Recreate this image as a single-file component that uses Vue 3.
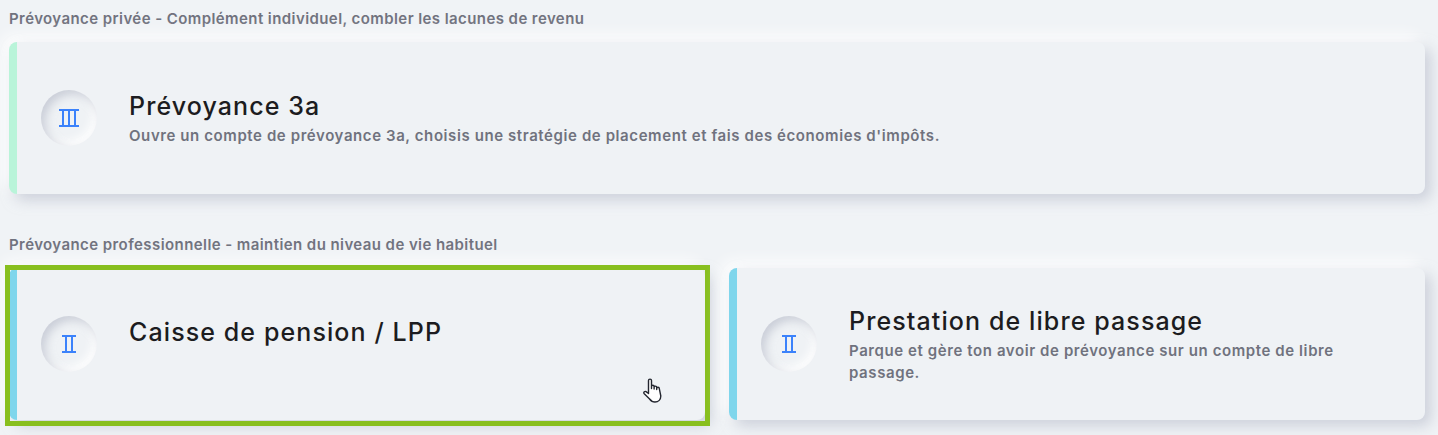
<script setup>
const sections = [
  {
    label: 'Prévoyance privée - Complément individuel, combler les lacunes de revenu',
    cards: [
      {
        title: 'Prévoyance 3a',
        text: "Ouvre un compte de prévoyance 3a, choisis une stratégie de placement et fais des économies d'impôts.",
        pillar: 3,
        accent: '#b9f4d9',
      },
    ],
  },
  {
    label: 'Prévoyance professionnelle - maintien du niveau de vie habituel',
    cards: [
      { title: 'Caisse de pension / LPP', text: '', pillar: 2, accent: '#7fd6ec', selected: true },
      {
        title: 'Prestation de libre passage',
        text: 'Parque et gère ton avoir de prévoyance sur un compte de libre passage.',
        pillar: 2,
        accent: '#7fd6ec',
      },
    ],
  },
]
</script>

<template>
  <main class="page">
    <section v-for="section in sections" :key="section.label" class="section">
      <h2 class="label">{{ section.label }}</h2>
      <div class="cards">
        <article
          v-for="card in section.cards"
          :key="card.title"
          class="card"
          :class="{ selected: card.selected }"
          :style="{ borderLeftColor: card.accent }"
        >
          <div class="badge">
            <svg v-if="card.pillar === 3" width="20" height="18" viewBox="0 0 20 18" fill="#3b82fb">
              <rect width="20" height="2" />
              <rect y="16" width="20" height="2" />
              <rect x="3" width="2" height="18" />
              <rect x="9" width="2" height="18" />
              <rect x="15" width="2" height="18" />
            </svg>
            <svg v-else width="14" height="18" viewBox="0 0 14 18" fill="#3b82fb">
              <rect width="14" height="2" />
              <rect y="16" width="14" height="2" />
              <rect x="3" width="2" height="18" />
              <rect x="9" width="2" height="18" />
            </svg>
          </div>
          <div class="body">
            <h3>{{ card.title }}</h3>
            <p>{{ card.text }}</p>
          </div>
          <template v-if="card.selected">
            <span class="outline"></span>
            <svg class="cursor" width="20" height="26" viewBox="0 0 20 26" fill="#fff" stroke="#23262f" stroke-width="1.4" stroke-linejoin="round">
              <path d="M5.5 15.5V2.6a1.5 1.5 0 0 1 3 0V10.5V8.6a1.3 1.3 0 0 1 2.6 0V11V9.4a1.3 1.3 0 0 1 2.6 0V11.5V10.6a1.3 1.3 0 0 1 2.6 0L17.8 18c0 3.6-2.4 6-5.8 6-2.6 0-4-1-5.4-3L1 15.4c-.7-1 .9-2.6 2-1.8z" />
            </svg>
          </template>
        </article>
      </div>
    </section>
  </main>
</template>

<style scoped>
.page {
  box-sizing: border-box;
  height: 435px;
  padding: 9px 13px 0 9px;
  font-family: Inter, "Liberation Sans", sans-serif;
  overflow: hidden;
}

.section {
  margin-bottom: 41px;
}

.label {
  margin: 0 0 13px;
  font-size: 15px;
  line-height: 20px;
  font-weight: 600;
  letter-spacing: 0.42px;
  color: #70727e;
}

.cards {
  display: flex;
  gap: 24px;
}

.card {
  position: relative;
  flex: 1 1 0;
  box-sizing: border-box;
  height: 152px;
  display: flex;
  align-items: center;
  gap: 32px;
  padding-left: 24px;
  background: #eff2f5;
  border-left: 8px solid;
  border-radius: 8px;
  box-shadow: 6px 6px 14px rgba(180, 185, 200, 0.6), -6px -6px 16px #fff;
}

.badge {
  flex: none;
  width: 56px;
  height: 56px;
  display: flex;
  align-items: center;
  justify-content: center;
  border-radius: 50%;
  background: #eff2f5;
  box-shadow: inset 4px 4px 10px rgba(175, 180, 195, 0.6), inset -4px -4px 10px #fff;
}

.body {
  flex: 1;
  padding-right: 32px;
}

.body h3 {
  margin: 0;
  font-size: 25px;
  line-height: 33px;
  font-weight: 500;
  letter-spacing: 1.1px;
  color: #1c1c20;
}

.body p {
  margin: 2px 0 0;
  min-height: 22px;
  font-size: 15px;
  line-height: 22px;
  font-weight: 600;
  letter-spacing: 0.59px;
  color: #70727e;
}

.outline {
  position: absolute;
  left: -12px;
  right: -5px;
  top: -3px;
  bottom: -6px;
  border: 5px solid #88bf1f;
}

.cursor {
  position: absolute;
  left: 626px;
  top: 110px;
}
</style>

<style>
body {
  background: #f0f3f6;
}
</style>
